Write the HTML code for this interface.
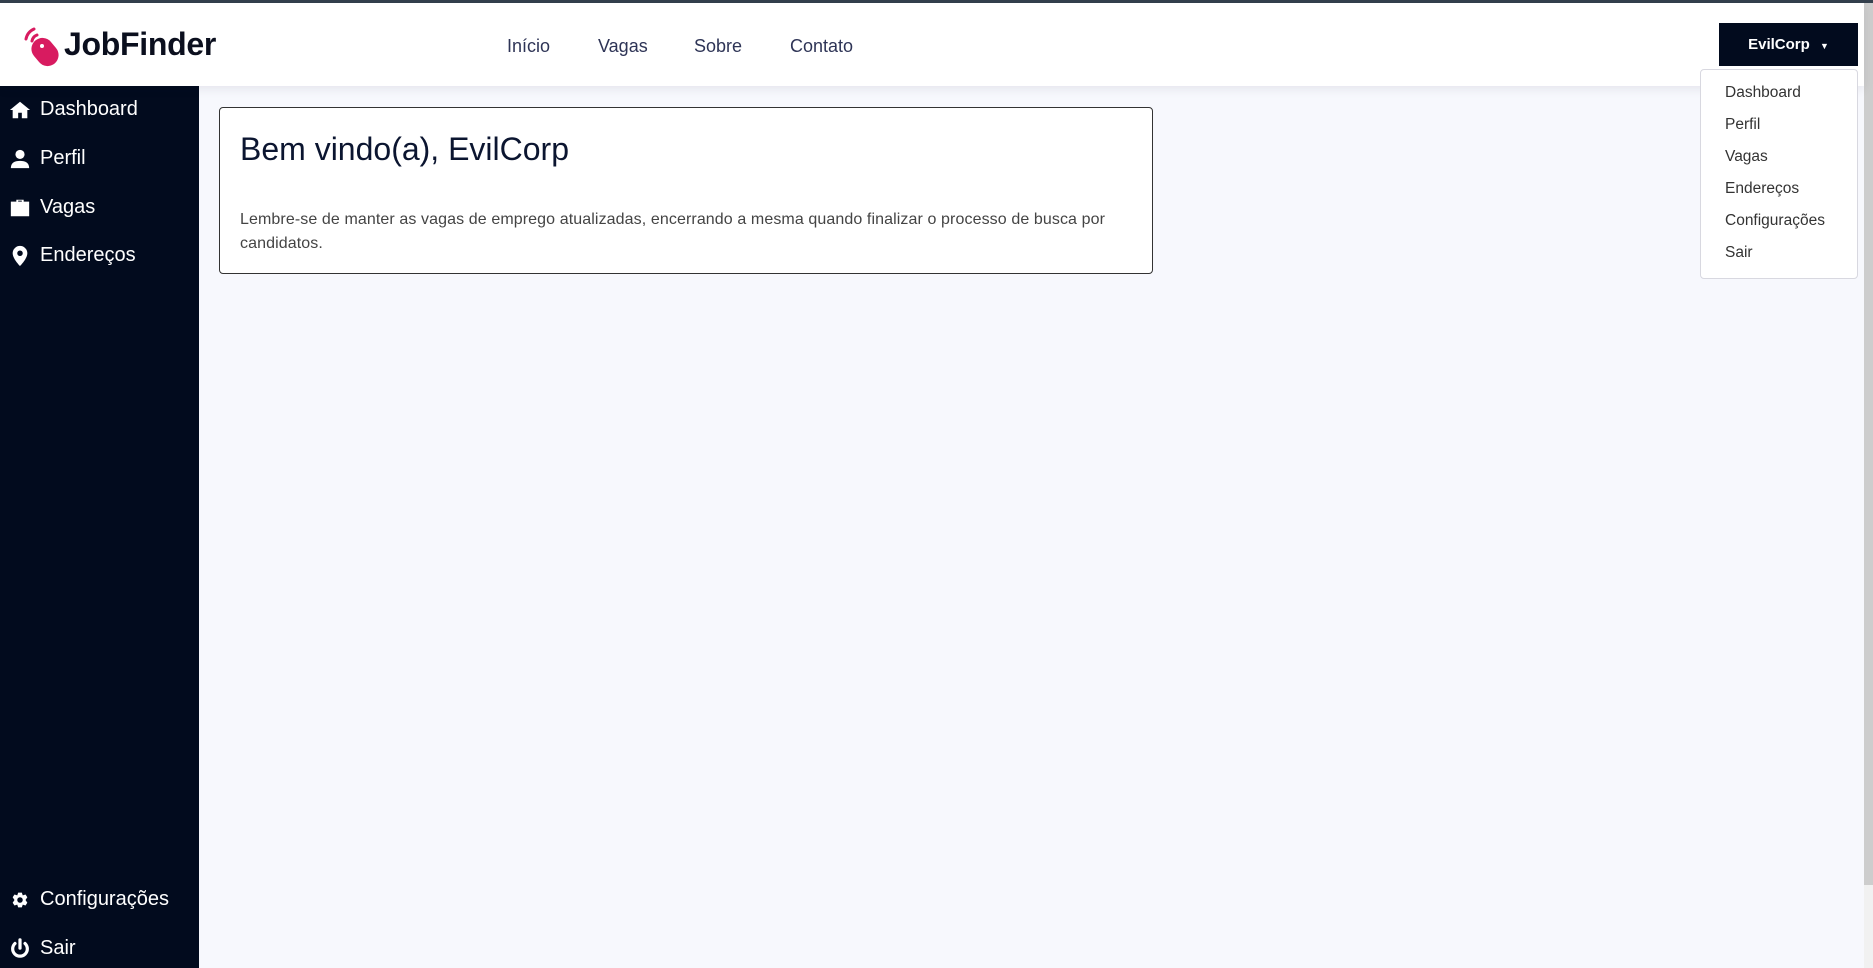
<!DOCTYPE html>
<html><head><meta charset="utf-8"><style>
*{margin:0;padding:0;box-sizing:border-box}
body{width:1873px;height:968px;overflow:hidden;background:#f7f8fd;font-family:"Liberation Sans",sans-serif;position:relative}
.top{position:absolute;left:0;top:0;width:1873px;height:3px;background:#34404d}
.hdr{position:absolute;left:0;top:3px;width:1864px;height:83px;background:#fff;box-shadow:0 3px 10px rgba(0,0,40,.08);z-index:2}
.logo{position:absolute;left:64px;top:23px;font-size:32px;font-weight:bold;color:#0b0f1e;letter-spacing:-0.3px}
.nav a{position:absolute;top:33px;font-size:18px;color:#2e3456;text-decoration:none}
.side{position:absolute;left:0;top:86px;width:199px;height:882px;background:#020b1e;color:#fff}
.si{position:absolute;left:9px;font-size:20px;display:flex;align-items:center}
.si svg{width:22px;height:22px;margin-right:9px;fill:#fff}
.card{position:absolute;left:219px;top:107px;width:934px;height:167px;background:#fff;border:1px solid #333;border-radius:4px}
.card h1{position:absolute;left:20px;top:23px;font-size:32px;font-weight:normal;color:#0b1530}
.card p{position:absolute;left:20px;top:100px;width:900px;font-size:16px;line-height:24px;color:#444;letter-spacing:0.1px}
.btn{position:absolute;left:1719px;top:23px;width:139px;height:43px;background:#020b1e;color:#fff;font-weight:bold;font-size:15px;line-height:43px;text-align:center;z-index:3}
.dd{position:absolute;left:1700px;top:69px;width:158px;height:210px;background:#fff;border:1px solid #d8d8e0;border-radius:4px;z-index:3}
.dd div{position:absolute;left:24px;font-size:15.5px;color:#333}
.sb{position:absolute;left:1864px;top:3px;width:9px;height:965px;background:#f1f1f1}
.sb div{height:882px;background:#cdcdcd}
</style></head><body>
<div class="top"></div>
<div class="hdr">
<svg style="position:absolute;left:18px;top:22px" width="44" height="42" viewBox="0 0 44 42"><path d="M8 14 A14 14 0 0 1 16 4" stroke="#d81b60" stroke-width="3" fill="none" stroke-linecap="round"/><path d="M14 16 A8 8 0 0 1 19 10" stroke="#d81b60" stroke-width="3" fill="none" stroke-linecap="round"/><rect x="16" y="12" width="22" height="30" rx="11" transform="rotate(-40 27 27)" fill="#d81b60"/><circle cx="24" cy="21" r="2" fill="#fff"/></svg>
<div class="logo">JobFinder</div>
<div class="nav"><a style="left:507px">Início</a><a style="left:598px">Vagas</a><a style="left:694px">Sobre</a><a style="left:790px">Contato</a></div>
</div>
<div class="btn">EvilCorp <span style="font-size:9px;margin-left:6px">▼</span></div>
<div class="dd">
<div style="top:14px">Dashboard</div><div style="top:46px">Perfil</div><div style="top:78px">Vagas</div><div style="top:110px">Endereços</div><div style="top:142px">Configurações</div><div style="top:174px">Sair</div>
</div>
<div class="side">
<div class="si" style="top:12px"><svg viewBox="0 0 24 24"><path d="M12 3 1 12h3v9h6v-6h4v6h6v-9h3z"/></svg>Dashboard</div>
<div class="si" style="top:61px"><svg viewBox="0 0 24 24"><circle cx="12" cy="7" r="5"/><path d="M2 22c0-6 4-8 10-8s10 2 10 8z"/></svg>Perfil</div>
<div class="si" style="top:110px"><svg viewBox="0 0 24 24"><path d="M8 5V3h8v2h6v16H2V5zm2 0h4V4h-4z"/></svg>Vagas</div>
<div class="si" style="top:158px"><svg viewBox="0 0 24 24"><path d="M12 1a8 8 0 0 0-8 8c0 6 8 14 8 14s8-8 8-14a8 8 0 0 0-8-8zm0 11a3 3 0 1 1 0-6 3 3 0 0 1 0 6z"/></svg>Endereços</div>
<div class="si" style="top:802px"><svg viewBox="0 0 24 24"><path d="M10 1h4l1 3 3-1 2 3-2 3 2 3-2 3-3-1-1 3h-4l-1-3-3 1-2-3 2-3-2-3 2-3 3 1zm2 5a3 3 0 1 0 0 6 3 3 0 0 0 0-6z" transform="translate(0 3)"/></svg>Configurações</div>
<div class="si" style="top:851px"><svg viewBox="0 0 24 24"><path d="M12 2v9" stroke="#fff" stroke-width="3.5" stroke-linecap="round" fill="none"/><path d="M6.5 6a8 8 0 1 0 11 0" stroke="#fff" stroke-width="3.5" stroke-linecap="round" fill="none"/></svg>Sair</div>
</div>
<div class="card"><h1>Bem vindo(a), EvilCorp</h1><p>Lembre-se de manter as vagas de emprego atualizadas, encerrando a mesma quando finalizar o processo de busca por<br>candidatos.</p></div>
<div class="sb"><div></div></div>
</body></html>
